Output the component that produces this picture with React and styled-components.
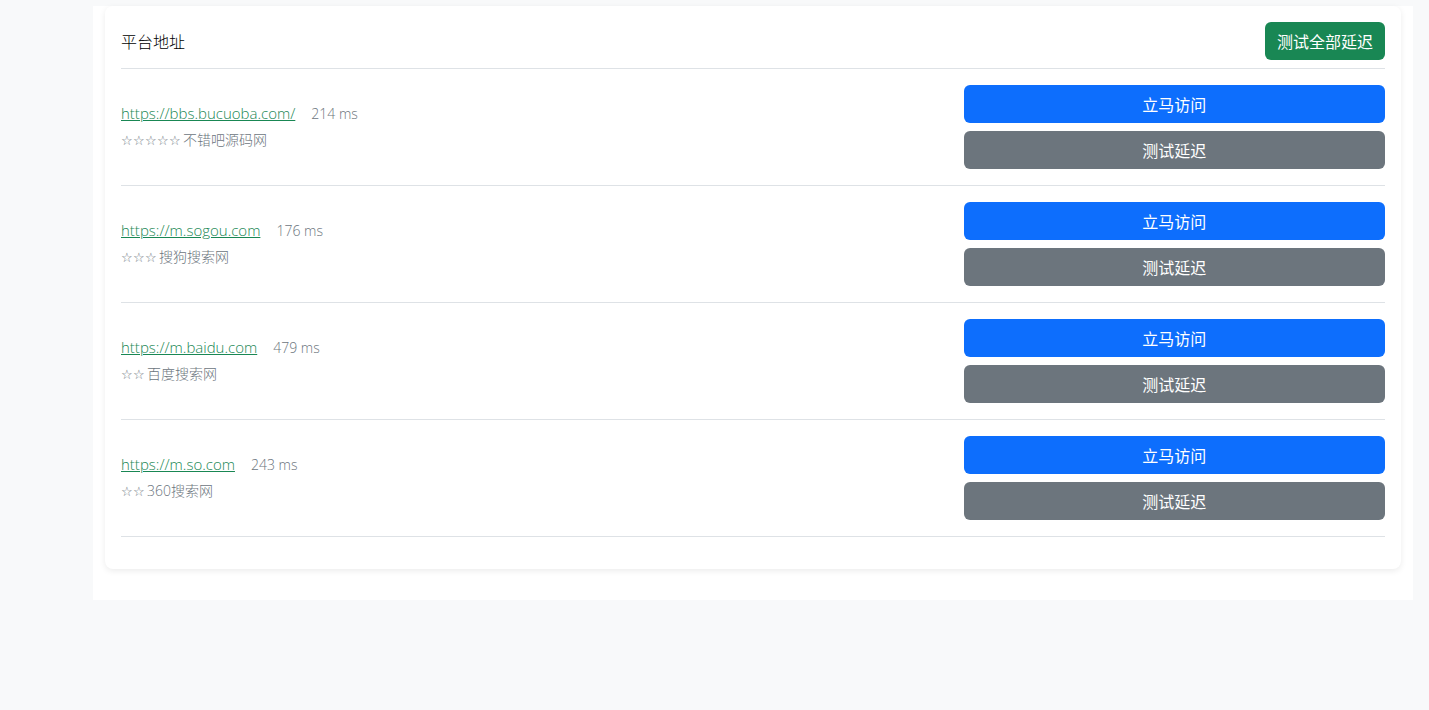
import React from 'react'
import styled, { createGlobalStyle } from 'styled-components'

const GlobalStyle = createGlobalStyle`
  html, body {
    margin: 0;
    padding: 0;
    background: #f8f9fa;
    font-family: "Open Sans", "Noto Sans CJK SC", sans-serif;
    color: #212529;
  }
  * { box-sizing: border-box; }
`

const Page = styled.div`
  min-height: 710px;
  padding: 6px 16px 0 93px;
`

const Main = styled.div`
  background: #fff;
  padding: 0 12px 31px;
`

const Card = styled.div`
  background: #fff;
  border-radius: 8px;
  box-shadow: 0 2px 6px rgba(0, 0, 0, 0.08);
  padding: 16px 16px 32px;
`

const Header = styled.div`
  display: flex;
  align-items: center;
  justify-content: space-between;
  padding-bottom: 8px;
  border-bottom: 1px solid #dee2e6;
`

const Title = styled.h5`
  margin: 0;
  font-size: 16px;
  font-weight: 300;
  color: #000;
  font-family: "Noto Sans CJK SC", sans-serif;
`

const Button = styled.button`
  display: block;
  height: 38px;
  padding: 0 12px;
  border: none;
  border-radius: 6px;
  font-family: "Noto Sans CJK SC", sans-serif;
  font-size: 16px;
  font-weight: 400;
  color: #fff;
  cursor: pointer;
  background: ${p => (p.$variant === 'success' ? '#198754' : p.$variant === 'secondary' ? '#6c757d' : '#0d6efd')};
  width: ${p => (p.$block ? '100%' : 'auto')};
`

const Row = styled.div`
  display: grid;
  grid-template-columns: 2fr 1fr;
  align-items: center;
  padding: 16px 0;
  border-bottom: 1px solid #dee2e6;
`

const Info = styled.div`
  display: flex;
  flex-direction: column;
  gap: 6px;
  padding-bottom: 3px;
`

const UrlLine = styled.div`
  display: flex;
  align-items: baseline;
  gap: 16px;
`

const Url = styled.a`
  font-size: 15px;
  font-weight: 300;
  color: #198754;
  text-decoration: underline;
  cursor: pointer;
`

const Latency = styled.span`
  font-size: 14px;
  font-weight: 300;
  color: #6c757d;
`

const Desc = styled.div`
  font-size: 14px;
  font-weight: 300;
  color: #6c757d;
`

const Stars = styled.span`
  font-family: "DejaVu Sans", sans-serif;
  font-size: 12.5px;
  margin-right: 2px;
`

const Actions = styled.div`
  display: flex;
  flex-direction: column;
  gap: 8px;
`

const sites = [
  { url: 'https://bbs.bucuoba.com/', ms: 214, stars: 5, name: '不错吧源码网' },
  { url: 'https://m.sogou.com', ms: 176, stars: 3, name: '搜狗搜索网' },
  { url: 'https://m.baidu.com', ms: 479, stars: 2, name: '百度搜索网' },
  { url: 'https://m.so.com', ms: 243, stars: 2, name: '360搜索网' },
]

const App = () => {
  return (
    <Page>
      <GlobalStyle />
      <Main>
        <Card>
          <Header>
            <Title>平台地址</Title>
            <Button $variant="success">测试全部延迟</Button>
          </Header>
          {sites.map(s => (
            <Row key={s.url}>
              <Info>
                <UrlLine>
                  <Url>{s.url}</Url>
                  <Latency>{s.ms} ms</Latency>
                </UrlLine>
                <Desc>
                  <Stars>{'☆'.repeat(s.stars)}</Stars>
                  {s.name}
                </Desc>
              </Info>
              <Actions>
                <Button $block>立马访问</Button>
                <Button $block $variant="secondary">测试延迟</Button>
              </Actions>
            </Row>
          ))}
        </Card>
      </Main>
    </Page>
  )
}

export default App
